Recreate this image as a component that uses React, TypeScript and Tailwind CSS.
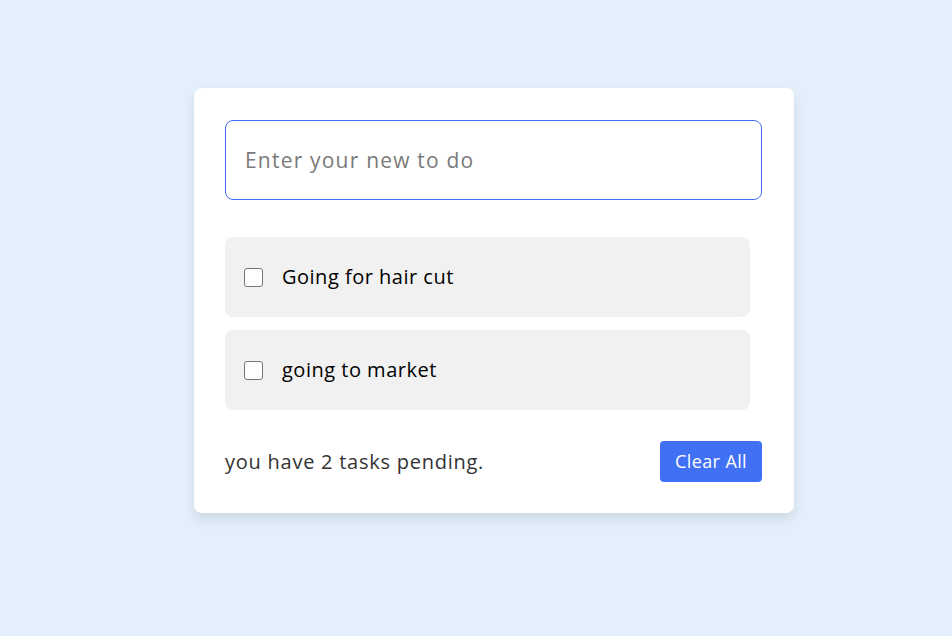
import { useState } from "react";

type Todo = {
  id: number;
  text: string;
  done: boolean;
};

const App = () => {
  const [todos, setTodos] = useState<Todo[]>([
    { id: 1, text: "Going for hair cut", done: false },
    { id: 2, text: "going to market", done: false },
  ]);
  const [value, setValue] = useState("");

  const pending = todos.filter((t) => !t.done).length;

  return (
    <div
      className="min-h-screen w-full bg-[#e3f0fb] pl-[194px] pt-[88px]"
      style={{ fontFamily: '"Open Sans", "Noto Sans", sans-serif' }}
    >
      <div className="w-[600px] rounded-lg bg-white px-[31px] pb-[31px] pt-[32px] shadow-[0_6px_12px_rgba(0,0,0,0.1)]">
        <input
          type="text"
          value={value}
          onChange={(e) => setValue(e.target.value)}
          placeholder="Enter your new to do"
          className="block h-[80px] w-[537px] rounded-lg border border-[#4070f4] px-[19px] text-[21px] tracking-[1.2px] text-[#333] outline-none placeholder:text-[#7a7a7a]"
        />

        <ul className="mt-[37px] flex w-[525px] flex-col gap-[13px]">
          {todos.map((todo) => (
            <li
              key={todo.id}
              className="flex h-[80px] items-center rounded-lg bg-[#f1f1f1] pl-[19px]"
            >
              <input
                type="checkbox"
                checked={todo.done}
                onChange={() =>
                  setTodos(
                    todos.map((t) =>
                      t.id === todo.id ? { ...t, done: !t.done } : t
                    )
                  )
                }
                className="h-[19px] w-[19px] appearance-none rounded-[3px] border border-[#767676] bg-white"
              />
              <span className="ml-[19px] text-[20px] tracking-[0.5px] text-black">
                {todo.text}
              </span>
            </li>
          ))}
        </ul>

        <div className="mt-[31px] flex items-center justify-between">
          <span className="text-[20px] tracking-[0.75px] text-[#333]">
            you have {pending} tasks pending.
          </span>
          <button
            onClick={() => setTodos([])}
            className="mr-[1px] h-[41px] w-[102px] rounded-[4px] bg-[#4070f4] text-[18px] tracking-[0.4px] text-white"
          >
            Clear All
          </button>
        </div>
      </div>
    </div>
  );
};

export default App;
